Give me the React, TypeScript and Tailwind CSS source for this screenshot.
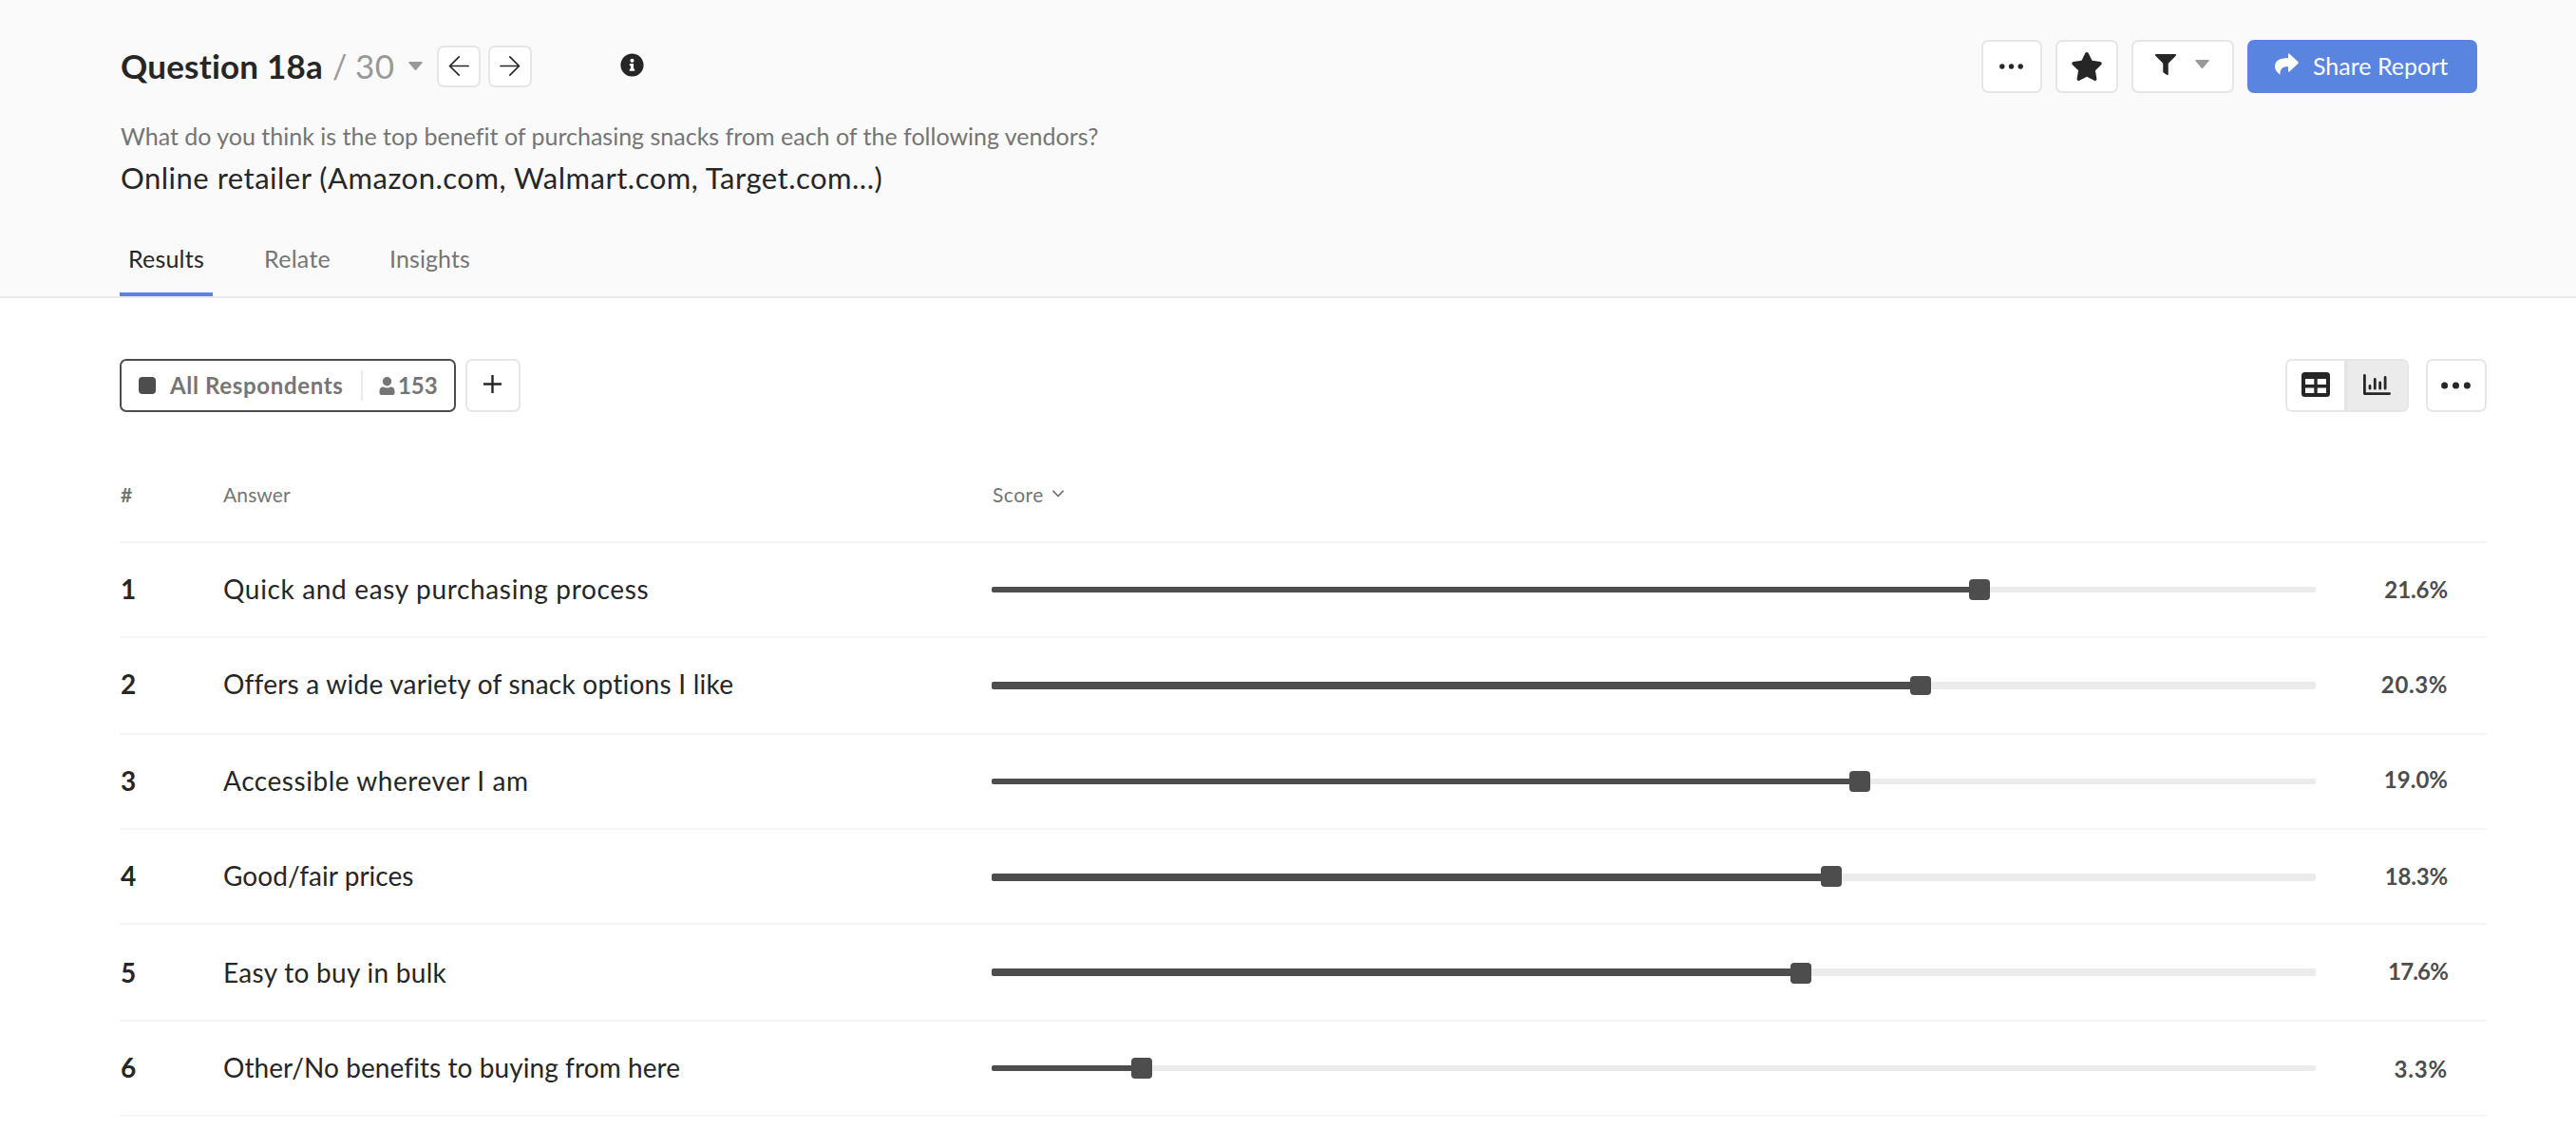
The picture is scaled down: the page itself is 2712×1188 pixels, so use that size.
import React from "react";
import { FaFilter, FaInfoCircle, FaStar } from "react-icons/fa";

type Answer = {
  rank: number;
  label: string;
  score: string;
  offset: number;
  row: string;
  text: string;
  labelTracking: string;
  value: string;
  bar: string;
  handle: string;
};

const answers: Answer[] = [
  { rank: 1, label: "Quick and easy purchasing process", score: "21.6%", offset: 1029, row: "h-[100px]", text: "mt-[28px]", labelTracking: "tracking-[0.66px]", value: "mt-[29px] tracking-[-0.1px]", bar: "h-[6px]", handle: "-top-[8px] h-[22px]" },
  { rank: 2, label: "Offers a wide variety of snack options I like", score: "20.3%", offset: 966.8, row: "h-[102px]", text: "mt-[28px]", labelTracking: "tracking-[0.24px]", value: "mt-[29px] tracking-[0.6px]", bar: "h-[8px]", handle: "-top-[6px] h-[20px]" },
  { rank: 3, label: "Accessible wherever I am", score: "19.0%", offset: 903, row: "h-[100px]", text: "mt-[28px]", labelTracking: "tracking-[0.55px]", value: "mt-[27px]", bar: "h-[6px]", handle: "-top-[8px] h-[22px]" },
  { rank: 4, label: "Good/fair prices", score: "18.3%", offset: 872.8, row: "h-[100px]", text: "mt-[28px]", labelTracking: "tracking-[0.04px]", value: "mt-[29px] tracking-[-0.2px]", bar: "h-[8px]", handle: "-top-[8px] h-[22px]" },
  { rank: 5, label: "Easy to buy in bulk", score: "17.6%", offset: 841, row: "h-[102px]", text: "mt-[30px]", labelTracking: "tracking-[0.29px]", value: "mt-[29px] tracking-[-0.85px]", bar: "h-[8px]", handle: "-top-[6px] h-[22px]" },
  { rank: 6, label: "Other/No benefits to buying from here", score: "3.3%", offset: 147, row: "h-[100px]", text: "mt-[28px]", labelTracking: "tracking-[0.08px]", value: "mt-[30px] tracking-[0.8px]", bar: "h-[6px]", handle: "-top-[8px] h-[22px]" },
];

const box = "flex shrink-0 items-center justify-center rounded-[7px] border-2 border-[#e6e6e6] bg-white";

function Caret() {
  return (
    <svg className="h-[10px] w-[15px] shrink-0 fill-[#999999]" viewBox="0 0 15 10">
      <path d="M1 0h13q1.400 0 .5 1.200L8.400 8.600q-.9 1-1.800 0L.5 1.200Q-.4 0 1 0Z" />
    </svg>
  );
}

function ThinArrow({ flip = false }: { flip?: boolean }) {
  return (
    <svg
      className={flip ? "h-[24px] w-[22px] -scale-x-100" : "h-[24px] w-[22px]"}
      viewBox="0 0 22 24"
      fill="none"
      stroke="#262626"
      strokeWidth="1.700"
      strokeLinecap="round"
      strokeLinejoin="round"
    >
      <path d="M21 11.500H1.500M11.200 1.800 1.500 11.500l9.700 9.700" />
    </svg>
  );
}

function Dots({ large = false }: { large?: boolean }) {
  return large ? (
    <svg className="mr-[2px] h-[8px] w-[31px] fill-[#262626]" viewBox="0 0 31 8">
      <circle cx="3.600" cy="4" r="3.500" />
      <circle cx="15.500" cy="4" r="3.500" />
      <circle cx="27.400" cy="4" r="3.500" />
    </svg>
  ) : (
    <svg className="mr-[2px] mb-px h-[6px] w-[25px] fill-[#262626]" viewBox="0 0 25 6">
      <circle cx="2.800" cy="3" r="2.700" />
      <circle cx="12.500" cy="3" r="2.700" />
      <circle cx="22.200" cy="3" r="2.700" />
    </svg>
  );
}

function Header() {
  return (
    <header className="h-[314px] border-b-2 border-[#ebebeb] bg-[#fafafa] pt-[42px] pr-[104px] pl-[127px]">
      <div className="flex h-[56px] justify-between">
        <div className="flex items-center">
          <h1 className="w-[223px] self-start text-[35px] leading-[54px] font-bold tracking-[0.2px] whitespace-nowrap text-[#262626]">
            Question 18a
          </h1>
          <span className="w-[24px] self-start text-[34px] leading-[55px] text-[#999999]">/</span>
          <span className="w-[56px] self-start text-[35px] leading-[54px] tracking-[0.5px] text-[#999999]">30</span>
          <Caret />
          <div className={`${box} ml-[15px] h-[44px] w-[46px]`}>
            <ThinArrow />
          </div>
          <div className={`${box} ml-[8px] h-[44px] w-[46px]`}>
            <ThinArrow flip />
          </div>
          <FaInfoCircle className="mb-[3px] ml-[93px] h-[25px] w-[25px] text-[#262626]" />
        </div>
        <div className="flex items-center">
          <div className={`${box} h-[56px] w-[64px]`}>
            <Dots />
          </div>
          <div className={`${box} ml-[14px] h-[56px] w-[66px]`}>
            <FaStar className="h-[30px] w-[34px] text-[#262626]" />
          </div>
          <div className={`${box} ml-[14px] h-[56px] w-[108px] pr-[2px] pb-[4px]`}>
            <FaFilter className="h-[22px] w-[22px] text-[#262626]" />
            <span className="ml-[20px]">
              <Caret />
            </span>
          </div>
          <div className="ml-[14px] flex h-[56px] w-[242px] rounded-[7px] bg-[#5985e1] pl-[29px]">
            <svg className="mt-[14px] h-[23px] w-[25px] fill-white" viewBox="0 0 25 23">
              <path d="M14 1.200Q14-.5 15.500.7L24.300 9q1 1 0 2l-8.800 8.300Q14 20.500 14 19v-4.700C9 13.800 5.500 16 5.600 21.500q0 1.300-1.100.5C1.500 19.500 0 17 0 14 0 8 5 5.200 14 5Z" />
            </svg>
            <span className="ml-[15px] text-[25px] leading-[54px] whitespace-nowrap text-white">Share Report</span>
          </div>
        </div>
      </div>
      <p className="mt-[23px] text-[25px] leading-[44px] text-[#757575]">
        What do you think is the top benefit of purchasing snacks from each of the following vendors?
      </p>
      <h2 className="text-[31px] leading-[44px] tracking-[0.5px] text-[#262626]">
        Online retailer (Amazon.com, Walmart.com, Target.com...)
      </h2>
      <nav className="mt-[25px] -ml-px flex h-[78px] gap-[44px] text-[25px] leading-[77px] text-[#757575]">
        <a className="w-[98px] border-b-4 border-[#5985e1] pl-[9px] tracking-[0.2px] text-[#262626]">Results</a>
        <a className="w-[88px] pl-[10px] tracking-[0.3px]">Relate</a>
        <a className="pl-[10px] tracking-[0.1px]">Insights</a>
      </nav>
    </header>
  );
}

function Toolbar() {
  return (
    <div className="flex h-[56px] justify-between">
      <div className="flex">
        <div className="flex h-[56px] w-[354px] items-center rounded-[7px] border-2 border-[#4d4d4d] bg-white pl-[18px] text-[24px] leading-[50px] font-bold text-[#757575]">
          <span className="h-[18px] w-[18px] rounded-[4px] bg-[#4d4d4d]" />
          <span className="ml-[15px] w-[201px] pb-px tracking-[0.66px] whitespace-nowrap">All Respondents</span>
          <span className="h-[32px] w-[2px] bg-[#ebebeb]" />
          <svg className="ml-[17px] h-[19px] w-[17px] fill-[#757575]" viewBox="0 0 17 19">
            <circle cx="8.500" cy="4.700" r="4.700" />
            <path d="M4.500 10.500q4 2 8 0c2.600 0 4 2 4 4.500v2q0 2-2 2h-12q-2 0-2-2v-2c0-2.500 1.400-4.500 4-4.500Z" />
          </svg>
          <span className="ml-[3px] pb-px tracking-[-0.1px]">153</span>
        </div>
        <div className={`${box} ml-[10px] h-[56px] w-[58px]`}>
          <svg className="mr-px mb-[3px] h-[19px] w-[19px]" viewBox="0 0 19 19" stroke="#262626" strokeWidth="2.400">
            <path d="M9.500 0v19M0 9.500h19" />
          </svg>
        </div>
      </div>
      <div className="flex">
        <div className="flex h-[56px] w-[130px] overflow-hidden rounded-[7px] border-2 border-[#e6e6e6]">
          <div className="flex w-[60px] items-center justify-center bg-white">
            <svg className="mb-[2px] h-[26px] w-[30px]" viewBox="0 0 30 26">
              <rect width="30" height="26" rx="3.500" fill="#262626" />
              <path d="M4 7h9.300v6H4zM16.700 7H26v6h-9.300zM4 16.500h9.300V22H4zM16.700 16.500H26V22h-9.300z" fill="#fff" />
            </svg>
          </div>
          <div className="flex grow items-center border-l-4 border-[#e6e6e6] bg-[#ebebeb] pl-[16px]">
            <svg
              className="mb-[3px] h-[22px] w-[29px]"
              viewBox="0 0 29 22"
              fill="none"
              stroke="#262626"
              strokeWidth="2.800"
              strokeLinecap="round"
              strokeLinejoin="round"
            >
              <path d="M1.400 1.400v19.200h26.200M7 12.400v2.800M12.300 5.400v9.800M17.700 9v6.200M23.100 3.400v11.800" />
            </svg>
          </div>
        </div>
        <div className={`${box} ml-[18px] h-[56px] w-[64px]`}>
          <Dots large />
        </div>
      </div>
    </div>
  );
}

const columns = "grid grid-cols-[108px_810px_1394px_1fr] items-start";

function AnswerRow({ answer }: { answer: Answer }) {
  return (
    <div className={`${columns} ${answer.row} border-b-2 border-[#f5f5f5]`}>
      <span className={`${answer.text} pl-px text-[28px] leading-[40px] font-bold text-[#262626]`}>{answer.rank}</span>
      <span
        className={`${answer.text} ${answer.labelTracking} pl-px text-[28px] leading-[40px] whitespace-nowrap text-[#262626]`}
      >
        {answer.label}
      </span>
      <div className={`${answer.bar} relative mt-[46px] rounded-[2px] bg-[#ebebeb]`}>
        <div className="h-full rounded-l-[2px] bg-[#4d4d4d]" style={{ width: answer.offset + 4 }} />
        <div
          className={`${answer.handle} absolute w-[22px] rounded-[4px] bg-[#4d4d4d]`}
          style={{ left: answer.offset }}
        />
      </div>
      <span className={`${answer.value} pr-[41px] text-right text-[24px] leading-[40px] font-bold text-[#4d4d4d]`}>
        {answer.score}
      </span>
    </div>
  );
}

export default function App() {
  return (
    <div className="h-[1188px] w-[2712px] overflow-hidden bg-white font-['Lato',sans-serif] [font-variant-ligatures:none]">
      <Header />
      <main className="pt-[64px] pr-[94px] pl-[126px]">
        <Toolbar />
        <div className={`${columns} h-[138px] border-b-2 border-[#f5f5f5] pt-[67px] text-[21px] leading-[40px] text-[#757575]`}>
          <span className="pl-px font-bold">#</span>
          <span className="pl-px tracking-[0.12px]">Answer</span>
          <span className="flex items-center pl-px tracking-[0.5px]">
            Score
            <svg
              className="mb-[2px] ml-[9px] h-[8px] w-[12px]"
              viewBox="0 0 12 8"
              fill="none"
              stroke="#757575"
              strokeWidth="1.800"
              strokeLinecap="round"
              strokeLinejoin="round"
            >
              <path d="m1 1.300 5 5.200 5-5.200" />
            </svg>
          </span>
        </div>
        {answers.map((answer) => (
          <AnswerRow key={answer.rank} answer={answer} />
        ))}
      </main>
    </div>
  );
}
